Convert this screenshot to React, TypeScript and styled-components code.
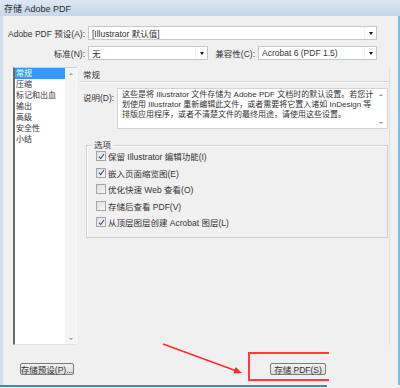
import React from 'react';
import styled, { createGlobalStyle } from 'styled-components';

const GlobalStyle = createGlobalStyle`
  html, body { margin: 0; padding: 0; background: #f0f0f0; }
  body { font-family: "Liberation Sans", "Noto Sans CJK SC", sans-serif; }
`;

const Window = styled.div`
  position: relative;
  width: 400px;
  height: 388px;
  overflow: hidden;
  display: flex;
  flex-direction: column;
  background: #f0f0f0;
  color: #333;
  font-family: "Liberation Sans", "Noto Sans CJK SC", sans-serif;
  font-size: 8.5px;
`;

const TitleBar = styled.div`
  flex: none;
  height: 16px;
  display: flex;
  align-items: center;
  padding-left: 4px;
  background: linear-gradient(#dce7f3, #c6d6e9);
  font-size: 9px;
  color: #2a2a2a;
`;

const Frame = styled.div`
  flex: 1;
  display: flex;
  flex-direction: column;
  border-left: 3px solid #d3dfed;
  border-right: 2px solid #7cbde6;
  padding: 10px 8px 0 10px;
`;

const BottomEdge = styled.div`
  flex: none;
  width: 327px;
  height: 2px;
  margin-bottom: 1px;
  background: #3b8ea5;
`;

const FormRow = styled.div<{ h: number; top: number }>`
  display: grid;
  grid-template-columns: 72px 120px 1fr 119px;
  column-gap: 3px;
  height: ${(p) => p.h}px;
  margin-top: ${(p) => p.top}px;
  margin-right: 13px;
`;

const Label = styled.div`
  display: flex;
  align-items: center;
  justify-content: flex-end;
  white-space: nowrap;
`;

const SelectBox = styled.div<{ span?: boolean }>`
  grid-column: ${(p) => (p.span ? '2 / -1' : 'auto')};
  display: flex;
  background: #fff;
  border: 1px solid #c4c7cc;
  font-size: 8.5px;
`;

const SelectText = styled.div`
  flex: 1;
  display: flex;
  align-items: center;
  padding-left: 3px;
  white-space: nowrap;
`;

const SelectArrow = styled.div`
  width: 11px;
  display: flex;
  align-items: center;
  justify-content: center;
  border-left: 1px solid #f2f2f2;
  &::after {
    content: '';
    border-top: 3px solid #111;
    border-left: 2.5px solid transparent;
    border-right: 2.5px solid transparent;
  }
`;

const Main = styled.div`
  display: flex;
  gap: 2px;
  height: 278px;
  margin-top: 7px;
`;

const ListBox = styled.div`
  width: 62px;
  display: flex;
  background: #fff;
  border-left: 2px solid #6b6b6b;
  border-top: 1px solid #cfcfcf;
  border-bottom: 1px solid #e4e4e4;
`;

const ListItems = styled.div`
  flex: 1;
  display: flex;
  flex-direction: column;
`;

const ListItem = styled.div<{ selected?: boolean }>`
  height: 11px;
  line-height: 11px;
  padding-left: 1px;
  font-size: 8px;
  white-space: nowrap;
  background: ${(p) => (p.selected ? '#3399ff' : 'transparent')};
  color: ${(p) => (p.selected ? '#fff' : '#333')};
`;

const ScrollTrack = styled.div<{ light?: boolean }>`
  width: 11px;
  display: flex;
  flex-direction: column;
  justify-content: space-between;
  align-items: center;
  padding: 5px 0 4px;
  background: ${(p) => (p.light ? '#fff' : '#f4f4f4')};
  border-right: 1px solid #fbfbfb;
`;

const ScrollArrow = styled.div<{ down?: boolean }>`
  width: 0;
  height: 0;
  border-left: 2px solid transparent;
  border-right: 2px solid transparent;
  ${(p) => (p.down ? 'border-top: 2px solid #9a9a9a;' : 'border-bottom: 2px solid #9a9a9a;')}
`;

const Panel = styled.div`
  flex: 1;
  display: flex;
  flex-direction: column;
  border-right: 1px solid #e2e2e2;
`;

const PanelHeader = styled.div`
  height: 14px;
  display: flex;
  align-items: center;
  padding-left: 4px;
  font-size: 8.5px;
  border-bottom: 1px solid #d6d6d6;
  box-shadow: 0 1px 0 #fff;
`;

const DescRow = styled.div`
  display: flex;
  margin-top: 6px;
  margin-right: 1px;
  padding-left: 4px;
`;

const DescLabel = styled.div`
  width: 34px;
  padding-top: 3px;
  white-space: nowrap;
`;

const TextArea = styled.div`
  flex: 1;
  height: 39px;
  display: flex;
  background: #fff;
  border: 1px solid #d2d4d8;
`;

const TextBody = styled.div`
  flex: 1;
  padding: 1px 0 0 4px;
  font-size: 8px;
  line-height: 10px;
  color: #333;
  white-space: nowrap;
`;

const Group = styled.div`
  position: relative;
  height: 89px;
  margin: 16px 1px 0 7px;
  padding: 2px 0 0 9px;
  border: 1px solid #d0d0d0;
  box-shadow: inset 1px 1px 0 #fff;
`;

const Legend = styled.div`
  position: absolute;
  top: -6px;
  left: 5px;
  padding: 0 2px;
  line-height: 11px;
  background: #f0f0f0;
`;

const CheckRow = styled.div`
  height: 16.5px;
  display: flex;
  align-items: center;
  gap: 2px;
  white-space: nowrap;
`;

const CheckBox = styled.div`
  width: 8px;
  height: 8px;
  display: flex;
  align-items: center;
  justify-content: center;
  border: 1px solid #a4a5a5;
  background: linear-gradient(135deg, #dedede, #f8f8f8);
`;

const Footer = styled.div`
  display: flex;
  margin-top: 18px;
  padding: 0 64px 0 7px;
  justify-content: space-between;
`;

const Button = styled.div<{ w: number }>`
  width: ${(p) => p.w}px;
  height: 12px;
  box-sizing: border-box;
  display: flex;
  align-items: center;
  justify-content: center;
  border: 1px solid #7a7a7a;
  border-radius: 2px;
  background: linear-gradient(#f4f4f4, #dadada);
  font-size: 8.5px;
  white-space: nowrap;
`;

const Highlight = styled.div`
  position: absolute;
  left: 248px;
  top: 352px;
  width: 79px;
  height: 25px;
  border: 2px solid #ff3b3b;
  border-right: none;
`;

const Overlay = styled.svg`
  position: absolute;
  left: 0;
  top: 0;
  pointer-events: none;
`;

const Check = () => (
  <svg width="7" height="7" viewBox="0 0 7 7">
    <path d="M1 3.6 L2.7 5.6 L6 1" fill="none" stroke="#3a4c9c" strokeWidth="1.1" />
  </svg>
);

const pages = ['常规', '压缩', '标记和出血', '输出', '高级', '安全性', '小结'];

const options = [
  { text: '保留 Illustrator 编辑功能(I)', on: true },
  { text: '嵌入页面缩览图(E)', on: true },
  { text: '优化快速 Web 查看(O)', on: false },
  { text: '存储后查看 PDF(V)', on: false },
  { text: '从顶层图层创建 Acrobat 图层(L)', on: true },
];

export default function App() {
  return (
    <Window>
      <GlobalStyle />
      <TitleBar>存储 Adobe PDF</TitleBar>
      <Frame>
        <FormRow h={13} top={0}>
          <Label>Adobe PDF 预设(A):</Label>
          <SelectBox span>
            <SelectText>[Illustrator 默认值]</SelectText>
            <SelectArrow />
          </SelectBox>
        </FormRow>
        <FormRow h={14} top={7}>
          <Label>标准(N):</Label>
          <SelectBox>
            <SelectText>无</SelectText>
            <SelectArrow />
          </SelectBox>
          <Label>兼容性(C):</Label>
          <SelectBox>
            <SelectText>Acrobat 6 (PDF 1.5)</SelectText>
            <SelectArrow />
          </SelectBox>
        </FormRow>

        <Main>
          <ListBox>
            <ListItems>
              {pages.map((p, i) => (
                <ListItem key={p} selected={i === 0}>
                  {p}
                </ListItem>
              ))}
            </ListItems>
            <ScrollTrack>
              <ScrollArrow />
              <ScrollArrow down />
            </ScrollTrack>
          </ListBox>

          <Panel>
            <PanelHeader>常规</PanelHeader>
            <DescRow>
              <DescLabel>说明(D):</DescLabel>
              <TextArea>
                <TextBody>
                  这些是将 Illustrator 文件存储为 Adobe PDF 文档时的默认设置。若您计
                  <br />
                  划使用 Illustrator 重新编辑此文件，或者需要将它置入诸如 InDesign 等
                  <br />
                  排版应用程序，或者不清楚文件的最终用途，请使用这些设置。
                </TextBody>
                <ScrollTrack light>
                  <ScrollArrow />
                  <ScrollArrow down />
                </ScrollTrack>
              </TextArea>
            </DescRow>

            <Group>
              <Legend>选项</Legend>
              {options.map((o) => (
                <CheckRow key={o.text}>
                  <CheckBox>{o.on && <Check />}</CheckBox>
                  {o.text}
                </CheckRow>
              ))}
            </Group>
          </Panel>
        </Main>

        <Footer>
          <Button w={54}>存储预设(P)...</Button>
          <Button w={56}>存储 PDF(S)</Button>
        </Footer>
      </Frame>
      <BottomEdge />

      <Highlight />
      <Overlay width="400" height="388">
        <line x1="163" y1="344" x2="236" y2="370.8" stroke="#ff2a2a" strokeWidth="1.5" />
        <polygon points="242,373 233.3,373.5 235.7,366.9" fill="#ff2a2a" />
      </Overlay>
    </Window>
  );
}
